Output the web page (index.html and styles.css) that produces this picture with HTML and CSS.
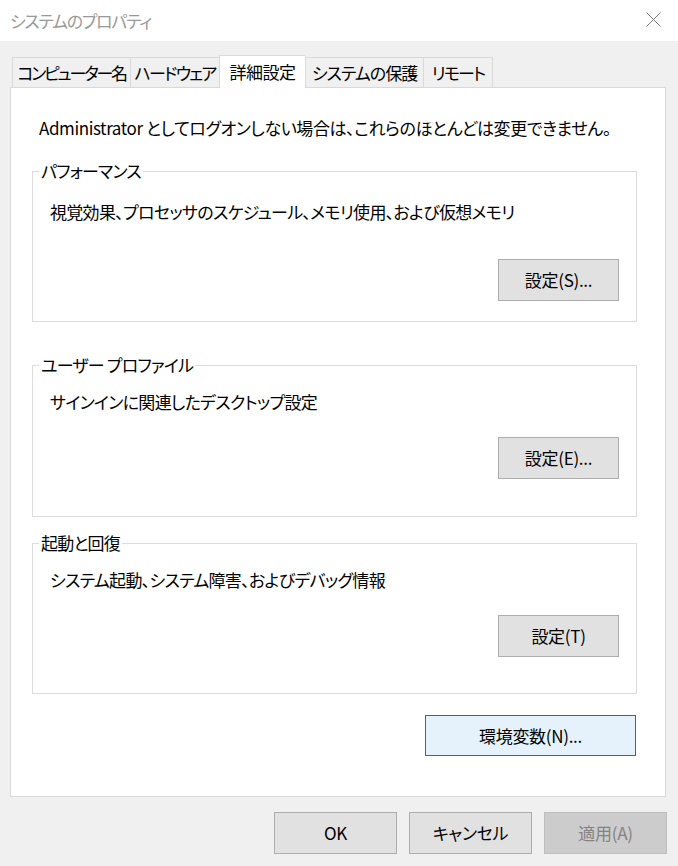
FILE: index.html
```html
<!DOCTYPE html>
<html lang="ja">
<head>
<meta charset="utf-8">
<title>システムのプロパティ</title>
<link rel="stylesheet" href="styles.css">
</head>
<body>
<div class="window">
  <header class="titlebar">
    <span class="title">システムのプロパティ</span>
    <svg class="close" width="15" height="15" viewBox="0 0 15 15" aria-hidden="true">
      <path d="M0.5 0.5 L14.5 14.5 M14.5 0.5 L0.5 14.5" stroke="#7a7a7a" stroke-width="1" fill="none"/>
    </svg>
  </header>
  <main class="content">
    <nav class="tabs">
      <div class="tab t1">コンピューター名</div>
      <div class="tab t2">ハードウェア</div>
      <div class="tab t3 active">詳細設定</div>
      <div class="tab t4">システムの保護</div>
      <div class="tab t5">リモート</div>
    </nav>
    <section class="panel">
      <p class="note">Administrator としてログオンしない場合は、これらのほとんどは変更できません。</p>
      <fieldset class="group g1">
        <legend>パフォーマンス</legend>
        <p class="desc">視覚効果、プロセッサのスケジュール、メモリ使用、および仮想メモリ</p>
        <div class="actions"><button class="btn small">設定(S)...</button></div>
      </fieldset>
      <fieldset class="group g2">
        <legend>ユーザー プロファイル</legend>
        <p class="desc">サインインに関連したデスクトップ設定</p>
        <div class="actions"><button class="btn small">設定(E)...</button></div>
      </fieldset>
      <fieldset class="group g3">
        <legend>起動と回復</legend>
        <p class="desc">システム起動、システム障害、およびデバッグ情報</p>
        <div class="actions"><button class="btn small">設定(T)</button></div>
      </fieldset>
      <div class="env-row"><button class="btn env">環境変数(N)...</button></div>
    </section>
    <footer class="dialog-buttons">
      <button class="btn wide">OK</button>
      <button class="btn wide">キャンセル</button>
      <button class="btn wide disabled">適用(A)</button>
    </footer>
  </main>
</div>
</body>
</html>
```

FILE: styles.css
```css
* { box-sizing: border-box; }

html, body {
  margin: 0;
  padding: 0;
}

body {
  width: 678px;
  height: 866px;
  background: #f0f0f0;
  font-family: "Noto Sans CJK JP", "Noto Sans", sans-serif;
  font-feature-settings: "palt";
  font-size: 17px;
  letter-spacing: -0.5px;
  color: #000;
  overflow: hidden;
}

.window {
  display: flex;
  flex-direction: column;
  height: 866px;
}

.titlebar {
  height: 41px;
  background: #fff;
  display: flex;
  align-items: center;
  justify-content: space-between;
  padding: 0 17px 0 10px;
}

.title {
  color: #999;
  font-size: 17px;
  line-height: 20px;
  letter-spacing: -1.3px;
}

.close {
  display: block;
  margin-top: -2px;
}

.content {
  padding: 14px 0 0 10px;
}

.tabs {
  display: flex;
  align-items: flex-end;
  padding-left: 2px;
  height: 32px;
}

.tab {
  height: 30px;
  border: 1px solid #d9d9d9;
  border-bottom: none;
  border-right: none;
  background: #f0f0f0;
  display: flex;
  align-items: center;
  justify-content: center;
  line-height: 20px;
  white-space: nowrap;
  letter-spacing: -1.8px;
}

.tab.t5 { border-right: 1px solid #d9d9d9; }

.t1 { width: 118px; letter-spacing: -2.3px; }
.t2 { width: 89px; }
.t3 { width: 86px; letter-spacing: -0.5px; }
.t4 { width: 118px; letter-spacing: -1px; }
.t5 { width: 70px; }

.tab.active {
  background: #fff;
  position: relative;
  z-index: 1;
  margin-bottom: -1px;
  height: 33px;
}
.tab.active + .tab { border-left: 1px solid #d9d9d9; }

.panel {
  width: 656px;
  height: 710px;
  background: #fff;
  border: 1px solid #d9d9d9;
  padding: 28px 28px 0 21px;
}

.note {
  margin: 0 0 21px 7px;
  line-height: 24px;
  white-space: nowrap;
  letter-spacing: -0.4px;
}

.group {
  margin: 0;
  padding: 0 17px 0 17px;
  border: 1px solid #dcdcdc;
  min-width: 0;
}

.group legend {
  margin-left: -11px;
  padding: 0 2px;
  line-height: 20px;
  height: 20px;
  letter-spacing: -0.8px;
}

.desc {
  margin: 0;
  line-height: 24px;
  white-space: nowrap;
  letter-spacing: -0.7px;
}

.actions {
  display: flex;
  justify-content: flex-end;
}

.g1 { padding-top: 19px; padding-bottom: 20px; }
.g1 .actions { margin-top: 35px; }

.g2 { margin-top: 33px; padding-top: 15px; padding-bottom: 37px; }
.g2 .actions { margin-top: 23px; }

.g3 { margin-top: 16px; padding-top: 15px; padding-bottom: 36px; }
.g3 .actions { margin-top: 23px; }

.btn {
  font-family: inherit;
  font-feature-settings: "palt";
  font-size: 17px;
  letter-spacing: -0.3px;
  color: #000;
  background: #e1e1e1;
  border: 1px solid #adadad;
  border-radius: 0;
  height: 42px;
  padding: 0;
  line-height: 20px;
  display: flex;
  align-items: center;
  justify-content: center;
}

.btn.small { width: 121px; }

.env-row {
  display: flex;
  justify-content: flex-end;
  margin-top: 21px;
  padding-right: 1px;
}

.btn.env {
  width: 211px;
  height: 41px;
  background: #e5f1fb;
  border-color: #0078d7;
}

.dialog-buttons {
  display: flex;
  justify-content: flex-end;
  gap: 12px;
  padding-right: 11px;
  margin-top: 15px;
}

.btn.wide {
  width: 123px;
  height: 42px;
}

.btn.disabled {
  background: #cccccc;
  border-color: #bfbfbf;
  color: #838383;
}
```
